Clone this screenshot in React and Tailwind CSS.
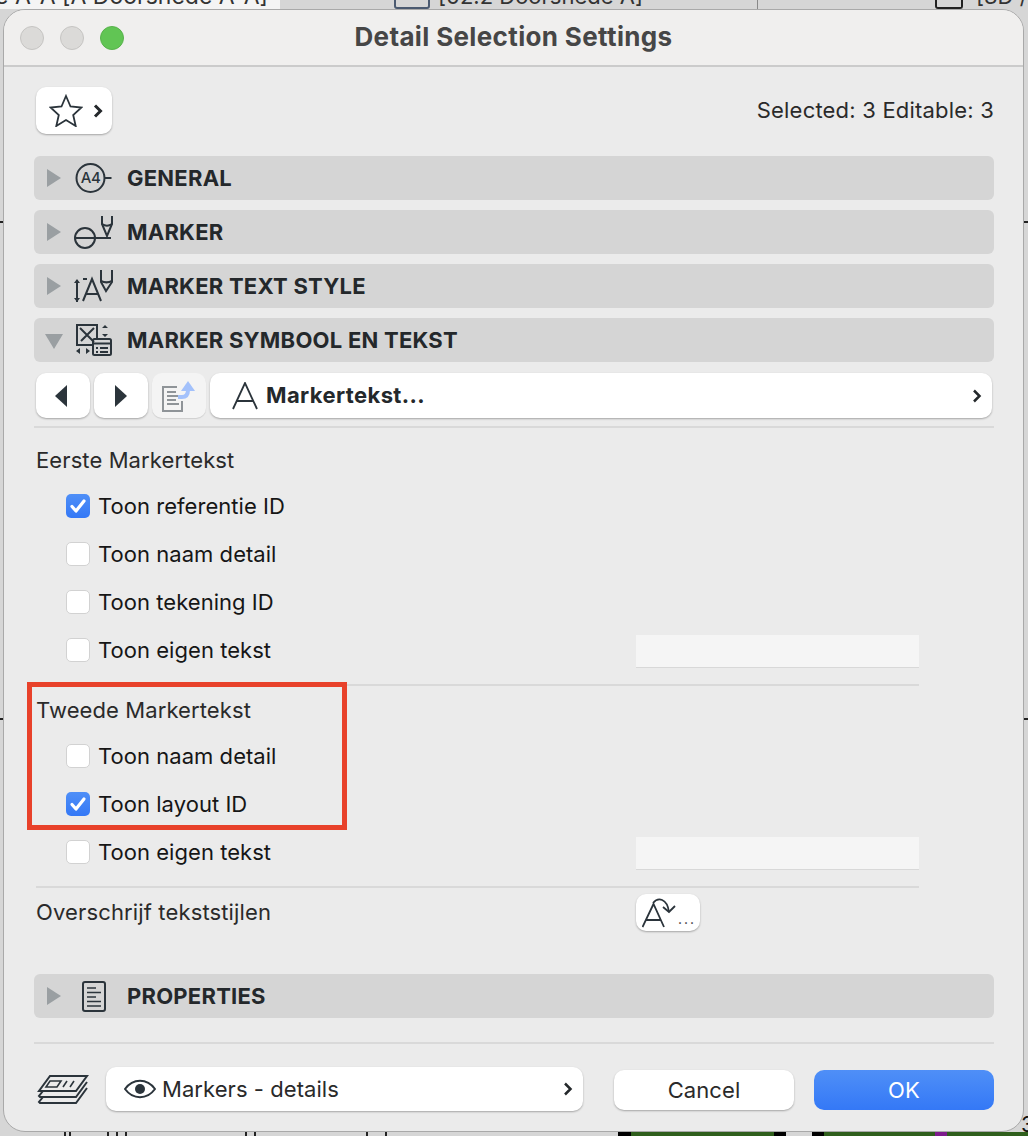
import React from 'react';

const font = { fontFamily: '"Inter", "Liberation Sans", sans-serif' };

const Tri = ({ open }) => (
  <svg width="20" height="20" viewBox="0 0 20 20" className="shrink-0">
    {open ? <path d="M1 4h18l-9 15z" fill="#9a9fa2" /> : <path d="M3 1l14 9-14 9z" fill="#9a9fa2" />}
  </svg>
);

const IconA4 = () => (
  <svg width="38" height="32" viewBox="0 0 38 32" fill="none" stroke="#2b343b" strokeWidth="2">
    <circle cx="15.5" cy="16" r="14" />
    <path d="M29.5 16h7" />
    <text x="15.5" y="21" textAnchor="middle" fontSize="15" fontWeight="500" letterSpacing="-0.5" fill="#2b343b" stroke="none" fontFamily="Inter, sans-serif">A4</text>
  </svg>
);

const IconMarker = () => (
  <svg width="40" height="34" viewBox="0 0 40 34" fill="none" stroke="#2b343b" strokeWidth="2">
    <circle cx="11" cy="23" r="10" />
    <path d="M1 23h36" />
    <path d="M28 1v8l5 12 5-12V1" />
    <path d="M28 9c3 2 7 2 10 0" />
  </svg>
);

const IconTextStyle = () => (
  <svg width="40" height="34" viewBox="0 0 40 34" fill="none" stroke="#2b343b" strokeWidth="2">
    <path d="M3 11v22" />
    <path d="M0 14l3-4 3 4zM0 29l3 4 3-4z" fill="#2b343b" stroke="none" />
    <path d="M9 32l9-22 9 22M12 25h12" />
    <path d="M9 10h4" />
    <path d="M27 1v12l5 9 6-9V1" />
    <path d="M27 12c4 2 7 2 11 0" />
  </svg>
);

const IconSymbol = () => (
  <svg width="38" height="34" viewBox="0 0 38 34" fill="none" stroke="#2b343b" strokeWidth="2">
    <path d="M18 22H2V2h20v14" />
    <path d="M5 5l14 14M19 5L6 18" />
    <path d="M24 3l3-3 3 3zM24 9l3 3 3-3z" fill="#2b343b" stroke="none" transform="translate(3 2)" />
    <rect x="18" y="16" width="18" height="16" rx="1.5" />
    <path d="M18 20.5h18" />
    <path d="M21 25h2M21 29h2M25 25h8M25 29h8" />
    <path d="M5 25l-4 3 4 3zM11 25l4 3-4 3z" fill="#2b343b" stroke="none" />
  </svg>
);

const IconProps = () => (
  <svg width="24" height="31" viewBox="0 0 24 31" fill="none" stroke="#2b343b" strokeWidth="2">
    <rect x="1" y="1" width="22" height="29" rx="2" />
    <path d="M5 7h9M5 11.5h14M5 16h9M5 20.500h14M5 25h14" strokeWidth="1.700" />
  </svg>
);

const Section = ({ open, icon, label }) => (
  <div className="h-[44px] rounded-[6px] bg-[#d5d5d5] flex items-center pl-[10px]">
    <Tri open={open} />
    <div className="w-[52px] ml-[4px] flex justify-center">{icon}</div>
    <span className="text-[22px] font-bold tracking-[0.24px] text-[#24282b] ml-[7px]">{label}</span>
  </div>
);

const Check = ({ on, label }) => (
  <div className="flex items-center h-[48px] pl-[30px]">
    {on ? (
      <div className="w-[24px] h-[24px] rounded-[5px] bg-gradient-to-b from-[#4f8ff7] to-[#3478f6] flex items-center justify-center">
        <svg width="18" height="16" viewBox="0 0 18 16" fill="none" stroke="#fff" strokeWidth="3.200" strokeLinecap="round" strokeLinejoin="round">
          <path d="M3 8.500l4 4.500 8-10" />
        </svg>
      </div>
    ) : (
      <div className="w-[24px] h-[24px] rounded-[5px] bg-white border border-[#d2d2d2]" />
    )}
    <span className="ml-[8px] text-[22px] tracking-[0.04px] text-[#161616]">{label}</span>
  </div>
);

const Field = () => (
  <div className="mt-[2px] w-[283px] h-[33px] bg-[#f5f5f5] border-b border-[#d8d8d8]" />
);

const whiteBtn = 'bg-white rounded-[10px] shadow-[0_1px_2px_rgba(0,0,0,0.3)]';

export default function App() {
  return (
    <div className="relative w-[1028px] h-[1136px] overflow-hidden bg-[#d6d6d6] pt-[9px] pl-[3px]" style={font}>
      {/* stuff behind the dialog */}
      <div className="absolute left-0 top-0 w-[280px] h-[9px] bg-[#f4f4f4]" />
      <span className="absolute left-[-5px] top-[-21px] text-[23px] text-[#333] whitespace-nowrap">e A-A [A Doorsnede A-A]</span>
      <div className="absolute left-[394px] top-[-6px] w-[36px] h-[15px] border-2 border-[#4b5a70] rounded-[3px]" />
      <span className="absolute left-[438px] top-[-20px] text-[22px] text-[#333] whitespace-nowrap">[02.2 Doorsnede A]</span>
      <div className="absolute left-[757px] top-0 w-px h-[9px] bg-[#888]" />
      <div className="absolute left-[935px] top-0 w-[28px] h-[9px] border-x-2 border-b-2 border-[#222] rounded-b-[3px]" />
      <span className="absolute left-[976px] top-[-20px] text-[22px] text-[#333] whitespace-nowrap">[3D /</span>
      <div className="absolute left-0 top-[221px] w-full h-[2px] bg-[#222]" />
      <div className="absolute left-0 top-[718px] w-full h-[2px] bg-[#222]" />
      <span className="absolute left-[1021px] top-[1108px] text-[22px] text-[#111]">3</span>

      {/* drawing peeking out under the dialog */}
      <div className="absolute left-0 right-0 bottom-0 h-[4px] flex">
        <div className="w-[64px]" />
        <div className="w-[2px] bg-[#222]" />
        <div className="w-[3px]" />
        <div className="w-[2px] bg-[#222]" />
        <div className="w-[36px]" />
        <div className="w-[2px] bg-[#222]" />
        <div className="w-[7px]" />
        <div className="w-[2px] bg-[#222]" />
        <div className="w-[7px]" />
        <div className="w-[2px] bg-[#222]" />
        <div className="w-[118px]" />
        <div className="w-[2px] bg-[#222]" />
        <div className="w-[7px]" />
        <div className="w-[2px] bg-[#222]" />
        <div className="w-[110px]" />
        <div className="w-[2px] bg-[#222]" />
        <div className="w-[17px]" />
        <div className="w-[2px] bg-[#222]" />
        <div className="w-[231px]" />
        <div className="w-[13px] bg-black" />
        <div className="w-[143px] bg-[#2f5f1c]" />
        <div className="w-[12px] bg-black" />
        <div className="w-[26px]" />
        <div className="w-[12px] bg-black" />
        <div className="w-[111px] bg-[#2f5f1c]" />
        <div className="w-[12px] bg-[#7d1c8c]" />
        <div className="flex-1 bg-[#2f5f1c]" />
      </div>

      {/* dialog */}
      <div className="relative w-[1021px] h-[1123px] bg-[#ebebeb] rounded-[22px] border border-[#a9a9a9] overflow-hidden flex flex-col">
        <div className="h-[57px] shrink-0 bg-[#f0efee] border-b-2 border-[#cbcbcb] relative flex items-center justify-center pb-[2px]">
          <div className="absolute left-[16px] top-[16px] flex gap-[16px]">
            <div className="w-[24px] h-[24px] rounded-full bg-[#dbdad8] border border-[#c5c4c2]" />
            <div className="w-[24px] h-[24px] rounded-full bg-[#dbdad8] border border-[#c5c4c2]" />
            <div className="w-[24px] h-[24px] rounded-full bg-[#61c554] border border-[#58b24c]" />
          </div>
          <span className="text-[26px] font-bold tracking-[0.35px] text-[#464646]">Detail Selection Settings</span>
        </div>

        <div className="flex-1 pl-[30px] pr-[29px] pt-[20px]">
          <div className="flex items-center justify-between h-[47px] pl-[2px]">
            <button className={`w-[76px] h-[47px] ${whiteBtn} flex items-center pl-[13px]`}>
              <svg width="34" height="33" viewBox="0 0 34 33" fill="none" stroke="#2b343b" strokeWidth="1.800" strokeLinejoin="miter">
                <path d="M17 2l4.500 10.500 11 1-8.300 7.500 2.500 11L17 26l-9.700 6 2.500-11L1.500 13.500l11-1z" />
              </svg>
              <svg width="10" height="14" viewBox="0 0 10 14" fill="none" stroke="#24282b" strokeWidth="3" className="ml-[10px]">
                <path d="M2 1.500l5.500 5.500L2 12.500" />
              </svg>
            </button>
            <span className="text-[22px] tracking-[0.2px] text-[#2a2a2a]">Selected: 3 Editable: 3</span>
          </div>

          <div className="mt-[22px] flex flex-col gap-[10px]">
            <Section icon={<IconA4 />} label="GENERAL" />
            <Section icon={<IconMarker />} label="MARKER" />
            <Section icon={<IconTextStyle />} label="MARKER TEXT STYLE" />
            <Section open icon={<IconSymbol />} label="MARKER SYMBOOL EN TEKST" />
          </div>

          <div className="mt-[11px] pl-[2px] pr-[2px] flex gap-[4px] h-[45px]">
            <button className={`w-[54px] ${whiteBtn} flex items-center justify-center pr-[4px]`}>
              <svg width="13" height="22" viewBox="0 0 13 22"><path d="M12 0v22L0 11z" fill="#2b343b" /></svg>
            </button>
            <button className={`w-[54px] ${whiteBtn} flex items-center justify-center pr-[1px]`}>
              <svg width="13" height="22" viewBox="0 0 13 22"><path d="M1 0v22l12-11z" fill="#2b343b" /></svg>
            </button>
            <button className="w-[54px] rounded-[10px] bg-[#f4f4f4] shadow-[0_1px_1px_rgba(0,0,0,0.12)] flex items-center justify-center">
              <svg width="34" height="32" viewBox="0 0 34 32" fill="none">
                <path d="M15 7H1v24h19V21" stroke="#8f9498" strokeWidth="2" />
                <path d="M5 12h9M5 16h12M5 20h9M5 24h12" stroke="#8f9498" strokeWidth="1.800" />
                <path d="M16 17h4c4 0 6-2 6-7" stroke="#a3c1fb" strokeWidth="4" />
                <path d="M19 11l7-10 7 10z" fill="#a3c1fb" />
              </svg>
            </button>
            <button className={`flex-1 ${whiteBtn} flex items-center pl-[22px] pr-[10px]`}>
              <svg width="26" height="28" viewBox="0 0 26 28" fill="none" stroke="#2b343b" strokeWidth="1.800">
                <path d="M1 27L13 1l12 26M5 19h16" />
              </svg>
              <span className="ml-[8px] text-[22px] font-bold tracking-[0.4px] text-[#24282b]">Markertekst...</span>
              <svg width="10" height="14" viewBox="0 0 10 14" fill="none" stroke="#24282b" strokeWidth="2.500" className="ml-auto">
                <path d="M2 1.500l5.500 5.500L2 12.500" />
              </svg>
            </button>
          </div>

          <div className="mt-[8px] h-[2px] bg-[#d9d9d9]" />

          <div className="pl-[2px] w-[885px]">
            <div className="mt-[18px] h-[28px] leading-[28px] text-[22px] tracking-[0.1px] text-[#2a2a2a]">Eerste Markertekst</div>
            <div className="mt-[8px]">
              <Check on label="Toon referentie ID" />
              <Check label="Toon naam detail" />
              <Check label="Toon tekening ID" />
              <div className="flex items-center justify-between">
                <Check label="Toon eigen tekst" />
                <Field />
              </div>
            </div>
            <div className="mt-[10px] h-[2px] bg-[#d9d9d9]" />
            <div className="mt-[10px] h-[28px] leading-[28px] text-[22px] tracking-[0.1px] text-[#2a2a2a]">Tweede Markertekst</div>
            <div className="mt-[8px]">
              <Check label="Toon naam detail" />
              <Check on label="Toon layout ID" />
              <div className="flex items-center justify-between">
                <Check label="Toon eigen tekst" />
                <Field />
              </div>
            </div>
            <div className="mt-[10px] h-[2px] bg-[#d9d9d9]" />
            <div className="mt-[5px] flex items-center h-[38px]">
              <span className="text-[22px] tracking-[0.14px] text-[#2a2a2a] w-[600px]">Overschrijf tekststijlen</span>
              <button className={`w-[64px] h-[37px] ${whiteBtn} flex items-center pl-[6px]`}>
                <svg width="36" height="31" viewBox="0 0 36 31" fill="none" stroke="#2b343b" strokeWidth="1.800">
                  <path d="M0.500 30L11.500 7 22 30M4 23h15" />
                  <path d="M11 6C16 0 25 1 27 15" />
                  <path d="M21 10l6 5 6-6" />
                </svg>
                <span className="text-[14px] tracking-[2px] leading-none text-[#333] mt-[14px]">...</span>
              </button>
            </div>
          </div>

          <div className="mt-[43px]">
            <Section icon={<IconProps />} label="PROPERTIES" />
          </div>

          <div className="mt-[24px] h-[2px] bg-[#d9d9d9]" />

          <div className="mt-[23px] flex items-center h-[44px]">
            <svg width="52" height="30" viewBox="0 0 52 30" fill="none" stroke="#2b343b" strokeWidth="2" className="ml-[3px] shrink-0">
              <path d="M13 2h37l-11 15H2z" />
              <path d="M13 7h11l-4 6H9zM30 7l-4 6M37 7l-4 6" strokeWidth="1.600" />
              <path d="M6 17l-4 5 1 1h36l11-15" />
              <path d="M6 23l-4 5 1 1h36l11-15" />
            </svg>
            <button className={`ml-[17px] w-[477px] h-[44px] ${whiteBtn} flex items-center pl-[18px] pr-[10px]`}>
              <svg width="32" height="20" viewBox="0 0 32 20" fill="none" stroke="#2b343b" strokeWidth="2">
                <path d="M1 10c8-11 22-11 30 0-8 11-22 11-30 0z" />
                <circle cx="16" cy="10" r="5" fill="#2b343b" stroke="none" />
              </svg>
              <span className="ml-[6px] text-[22px] tracking-[0.06px] text-[#2a2a2a]">Markers - details</span>
              <svg width="10" height="14" viewBox="0 0 10 14" fill="none" stroke="#24282b" strokeWidth="2.500" className="ml-auto">
                <path d="M2 1.500l5.500 5.500L2 12.500" />
              </svg>
            </button>
            <button className={`ml-[31px] w-[180px] h-[40px] mt-[2px] ${whiteBtn} text-[22px] tracking-[0.1px] text-[#2a2a2a]`}>Cancel</button>
            <button className="ml-[20px] w-[180px] h-[40px] mt-[2px] rounded-[10px] bg-gradient-to-b from-[#4f8ff7] to-[#3478f6] text-[22px] tracking-[0.1px] text-white">OK</button>
          </div>
        </div>
      </div>

      {/* annotation drawn over the screenshot */}
      <div className="absolute left-[27px] top-[682px] w-[320px] h-[148px] border-[5px] border-[#e8412a]" />
    </div>
  );
}
